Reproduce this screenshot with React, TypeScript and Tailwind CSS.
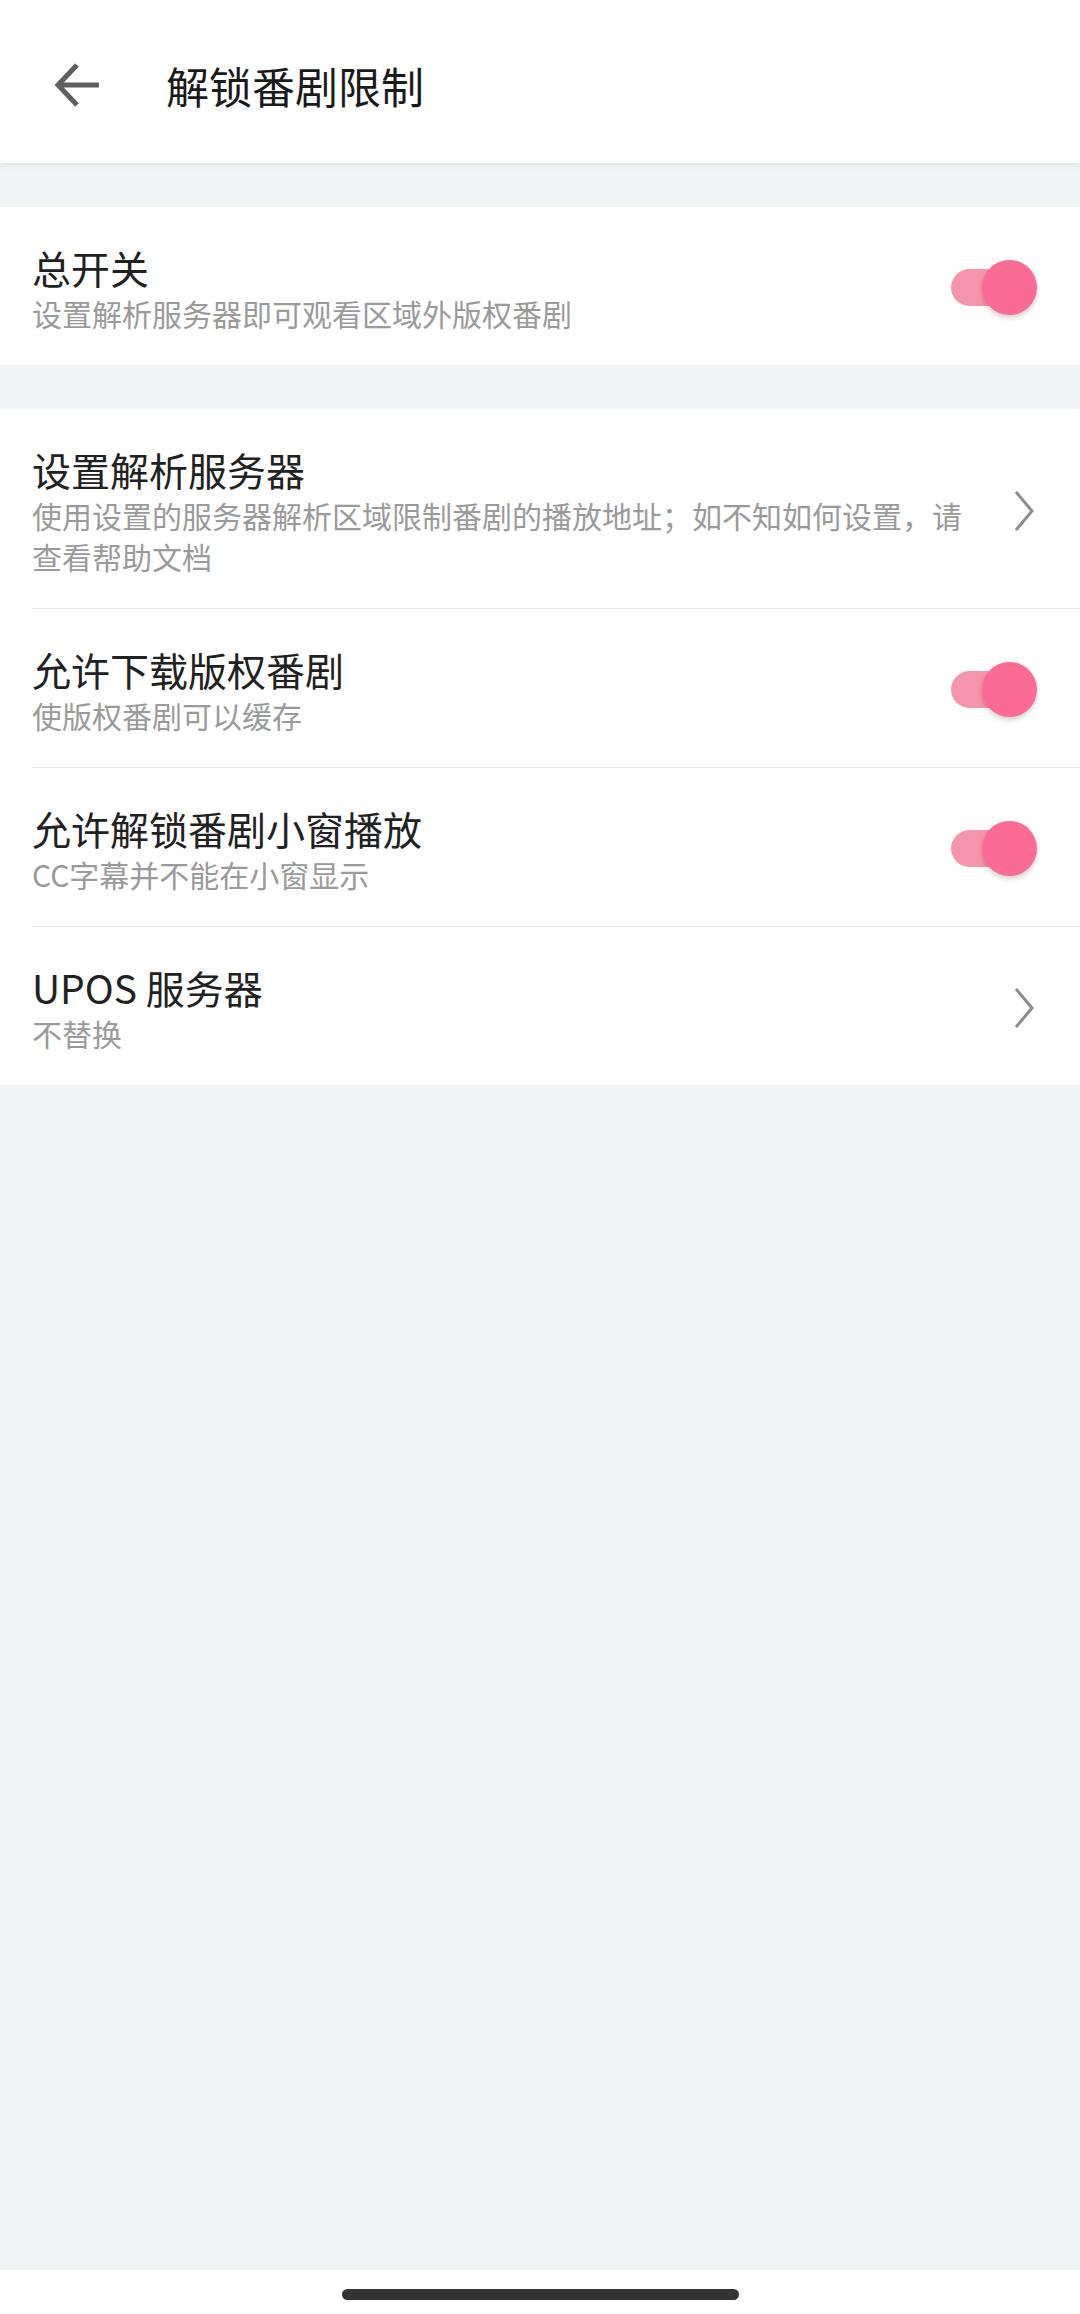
import React from 'react';

const font = { fontFamily: '"Noto Sans CJK SC", "Noto Sans", sans-serif' };

function Toggle() {
  return (
    <div className="relative w-[86px] h-[56px] shrink-0">
      <div className="absolute left-0 top-[9px] w-[76px] h-[37px] rounded-full bg-[#f495ac]" />
      <div className="absolute right-0 top-0 w-[55px] h-[55px] rounded-full bg-[#fc6b95] shadow-[0_3px_5px_rgba(0,0,0,0.18)]" />
    </div>
  );
}

function Chevron() {
  return (
    <svg width="22" height="42" viewBox="0 0 22 42" className="shrink-0 mr-[2px]">
      <path d="M3 2 L19 21 L3 40" fill="none" stroke="#8c8c8c" strokeWidth="3" />
    </svg>
  );
}

type RowProps = {
  title: string;
  sub: string;
  right: 'toggle' | 'chevron';
  divider?: boolean;
};

function Row({ title, sub, right, divider }: RowProps) {
  return (
    <div className="pl-[32px]">
      <div
        className={
          'flex items-center pt-[35px] pb-[31px] pr-[43px] ' +
          (divider ? 'border-b border-[#e6e6e6]' : '')
        }
      >
        <div className="w-[940px] shrink">
          <div className="text-[39px] leading-[50px] text-[#212121]">{title}</div>
          <div className="mt-[1px] text-[30px] leading-[41px] text-[#9a9a9a]">{sub}</div>
        </div>
        <div className="ml-auto flex items-center">
          {right === 'toggle' ? <Toggle /> : <Chevron />}
        </div>
      </div>
    </div>
  );
}

export default function App() {
  return (
    <div style={font} className="w-[1080px] h-[2314px] flex flex-col bg-[#f2f3f5] overflow-hidden">
      <div className="relative z-10 h-[163px] shrink-0 bg-white flex items-center pt-[7px] shadow-[0_2px_6px_rgba(0,0,0,0.07)]">
        <svg width="46" height="46" viewBox="0 0 46 46" className="ml-[54px]">
          <path d="M45 23 H6" fill="none" stroke="#5f5f5f" strokeWidth="5" />
          <path d="M23 3 L4 23 L23 43" fill="none" stroke="#5f5f5f" strokeWidth="5" />
        </svg>
        <div className="ml-[66px] text-[43px] leading-[56px] text-[#1a1a1a]">解锁番剧限制</div>
      </div>

      <div className="mt-[44px] bg-white">
        <Row title="总开关" sub="设置解析服务器即可观看区域外版权番剧" right="toggle" />
      </div>

      <div className="mt-[44px] bg-white">
        <Row
          title="设置解析服务器"
          sub="使用设置的服务器解析区域限制番剧的播放地址；如不知如何设置，请查看帮助文档"
          right="chevron"
          divider
        />
        <Row title="允许下载版权番剧" sub="使版权番剧可以缓存" right="toggle" divider />
        <Row title="允许解锁番剧小窗播放" sub="CC字幕并不能在小窗显示" right="toggle" divider />
        <Row title="UPOS 服务器" sub="不替换" right="chevron" />
      </div>

      <div className="flex-1" />

      <div className="h-[44px] shrink-0 bg-white flex justify-center pt-[19px]">
        <div className="w-[397px] h-[11px] rounded-full bg-[#333333]" />
      </div>
    </div>
  );
}
